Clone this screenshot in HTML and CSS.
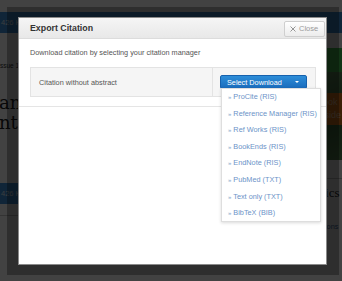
FILE: index.html
```html
<!DOCTYPE html>
<html>
<head>
  <title>Export Citation</title>
  <link rel="stylesheet" href="styles.css">
</head>
<body>
  <div class="page">
    <div class="topbar">426 KB)</div>
    <div class="columns">
      <div class="main">
        <p class="issue">ssue 1, 2015</p>
        <h1 class="title">an Evaluation<br>ntibody Levels</h1>
        <div class="pdf-bar">426 KB)</div>
        <div class="rule"></div>
      </div>
      <div class="aside">
        <div class="green-bar"></div>
        <div class="banner">
          <div class="banner-box">Book<br>Inside</div>
        </div>
        <div class="rule"></div>
        <h3 class="side-title">Topics</h3>
        <a href="#" class="side-link">Citations</a>
      </div>
    </div>
  </div>

  <div class="overlay"></div>

  <div class="modal-frame">
    <div class="modal">
      <div class="modal-header">
        <h2>Export Citation</h2>
        <button class="close">
          <svg width="6" height="6" viewBox="0 0 6 6"><path d="M0.5 0.5L5.5 5.5M5.5 0.5L0.5 5.5" stroke="#8a8a8a" stroke-width="0.9"/></svg>
          Close
        </button>
      </div>
      <div class="modal-body">
        <p class="intro">Download citation by selecting your citation manager</p>
        <div class="citation-row">
          <div class="citation-label">Citation without abstract</div>
          <div class="citation-download">
            <button class="select-download">Select Download <span class="caret"></span></button>
            <ul class="download-menu">
              <li><a href="#"><span class="raquo">&raquo;</span> ProCite (RIS)</a></li>
              <li><a href="#"><span class="raquo">&raquo;</span> Reference Manager (RIS)</a></li>
              <li><a href="#"><span class="raquo">&raquo;</span> Ref Works (RIS)</a></li>
              <li><a href="#"><span class="raquo">&raquo;</span> BookEnds (RIS)</a></li>
              <li><a href="#"><span class="raquo">&raquo;</span> EndNote (RIS)</a></li>
              <li><a href="#"><span class="raquo">&raquo;</span> PubMed (TXT)</a></li>
              <li><a href="#"><span class="raquo">&raquo;</span> Text only (TXT)</a></li>
              <li><a href="#"><span class="raquo">&raquo;</span> BibTeX (BIB)</a></li>
            </ul>
          </div>
        </div>
      </div>
      <div class="modal-footer"></div>
    </div>
  </div>
</body>
</html>
```

FILE: styles.css
```css
body {
  font-family: "Liberation Sans", Arial, sans-serif;
  background-color: #ffffff;
  margin: 0;
  padding: 0;
  overflow: hidden;
}

/* page behind the dialog */
.page {
  padding-top: 12px;
}

.topbar {
  background-color: #3f8fd6;
  color: #dfe9f3;
  height: 21px;
  line-height: 21px;
  font-size: 7.5px;
  padding-left: 1px;
}

.columns {
  display: flex;
}

.main {
  flex: 1;
}

.issue {
  margin: 29px 0 0 0;
  font-size: 6.5px;
  line-height: 8px;
  color: #333;
}

.title {
  margin: 23px 0 0 -1px;
  font-family: "DejaVu Serif", serif;
  font-weight: normal;
  font-size: 18px;
  line-height: 20px;
  color: #222;
}

.pdf-bar {
  margin-top: 50px;
  width: 160px;
  height: 21px;
  line-height: 21px;
  background-color: #3f8fd6;
  color: #dfe9f3;
  font-size: 7.5px;
  padding-left: 1px;
}

.rule {
  border-top: 1px solid #c8c8c8;
}

.main .rule {
  margin-top: 11px;
}

.aside {
  width: 60px;
}

.green-bar {
  margin-top: 15px;
  height: 24px;
  background-color: #48c855;
}

.banner {
  height: 88px;
  padding-top: 21px;
  box-sizing: border-box;
  background: linear-gradient(160deg, #6f9f6a, #3c6a3c 60%, #5b8a55);
}

.banner-box {
  margin-left: 32px;
  height: 32px;
  padding: 3px 0 0 3px;
  box-sizing: border-box;
  background-color: #e27a1c;
  color: #f4c9a0;
  font-size: 9px;
  line-height: 13px;
}

.aside .rule {
  margin-top: 18px;
}

.side-title {
  margin: 6px 0 0 23px;
  font-family: "Liberation Serif", serif;
  font-weight: normal;
  font-size: 13px;
  line-height: 16px;
  color: #222;
}

.side-link {
  display: block;
  margin: 21px 0 0 28px;
  font-size: 7.3px;
  color: #3a6ea8;
  text-decoration: none;
}

/* dim layers */
.overlay {
  position: fixed;
  left: 0;
  top: 0;
  right: 0;
  bottom: 0;
  background-color: rgba(0, 0, 0, 0.74);
}

.modal-frame {
  position: fixed;
  left: 7px;
  top: 7px;
  width: 332px;
  height: 268px;
  box-sizing: border-box;
  padding: 10px 12px 10px 11px;
  background-color: rgba(0, 0, 0, 0.3);
}

.modal {
  height: 100%;
  box-sizing: border-box;
  background-color: white;
  border: 1px solid #8a8a8a;
  display: flex;
  flex-direction: column;
}

.modal-header {
  height: 21px;
  box-sizing: border-box;
  border-bottom: 1px solid #dcdcdc;
  background: linear-gradient(#f5f5f5, #e8e8e8);
  display: flex;
  align-items: center;
  justify-content: space-between;
  padding: 0 1px 0 11px;
}

.modal-header h2 {
  margin: 0;
  font-size: 8.8px;
  font-weight: bold;
  color: #333;
}

.close {
  height: 16px;
  width: 41px;
  padding: 0 0 0 5px;
  border: 1px solid #cfcfcf;
  border-radius: 2px;
  background: linear-gradient(#ffffff, #ececec);
  color: #9a9a9a;
  font-family: "Liberation Sans", Arial, sans-serif;
  font-size: 7.5px;
  display: flex;
  align-items: center;
  gap: 3px;
  margin-top: 1px;
}

.modal-body {
  padding: 9px 10px 9px 11px;
}

.intro {
  margin: 0;
  font-size: 7.3px;
  line-height: 10px;
  color: #555;
}

.citation-row {
  margin-top: 9px;
  height: 30px;
  box-sizing: border-box;
  display: flex;
  background-color: #f5f5f5;
  border: 1px solid #e3e3e3;
}

.citation-label {
  flex: 1;
  border-right: 1px solid #e3e3e3;
  padding-left: 8px;
  font-size: 7.3px;
  color: #555;
  display: flex;
  align-items: center;
}

.citation-download {
  width: 102px;
  position: relative;
  padding: 7px 0 0 7px;
  box-sizing: border-box;
}

.select-download {
  width: 87px;
  height: 14px;
  box-sizing: border-box;
  border: 1px solid #1661ad;
  border-radius: 2px;
  background: linear-gradient(#2d8dd8, #1a6cbd);
  color: white;
  font-family: "Liberation Sans", Arial, sans-serif;
  font-size: 7.3px;
  padding: 0 0 0 6px;
  display: flex;
  align-items: center;
  justify-content: space-between;
}

.caret {
  width: 0;
  height: 0;
  border-left: 2.5px solid transparent;
  border-right: 2.5px solid transparent;
  border-top: 2.5px solid white;
  margin-right: 7px;
}

.download-menu {
  position: absolute;
  left: 8px;
  top: 20px;
  width: 100px;
  height: 134px;
  box-sizing: border-box;
  margin: 0;
  padding: 0;
  list-style: none;
  background-color: white;
  border: 1px solid #dedede;
  box-shadow: 0 1px 3px rgba(0, 0, 0, 0.15);
}

.download-menu li a {
  display: block;
  padding-left: 6px;
  line-height: 16.6px;
  font-size: 7.3px;
  color: #6c93c8;
  text-decoration: none;
  white-space: nowrap;
}

.raquo {
  font-size: 6px;
  color: #7f9fc9;
}

.modal-footer {
  flex: 1;
  border-top: 1px solid #e5e5e5;
}
```
